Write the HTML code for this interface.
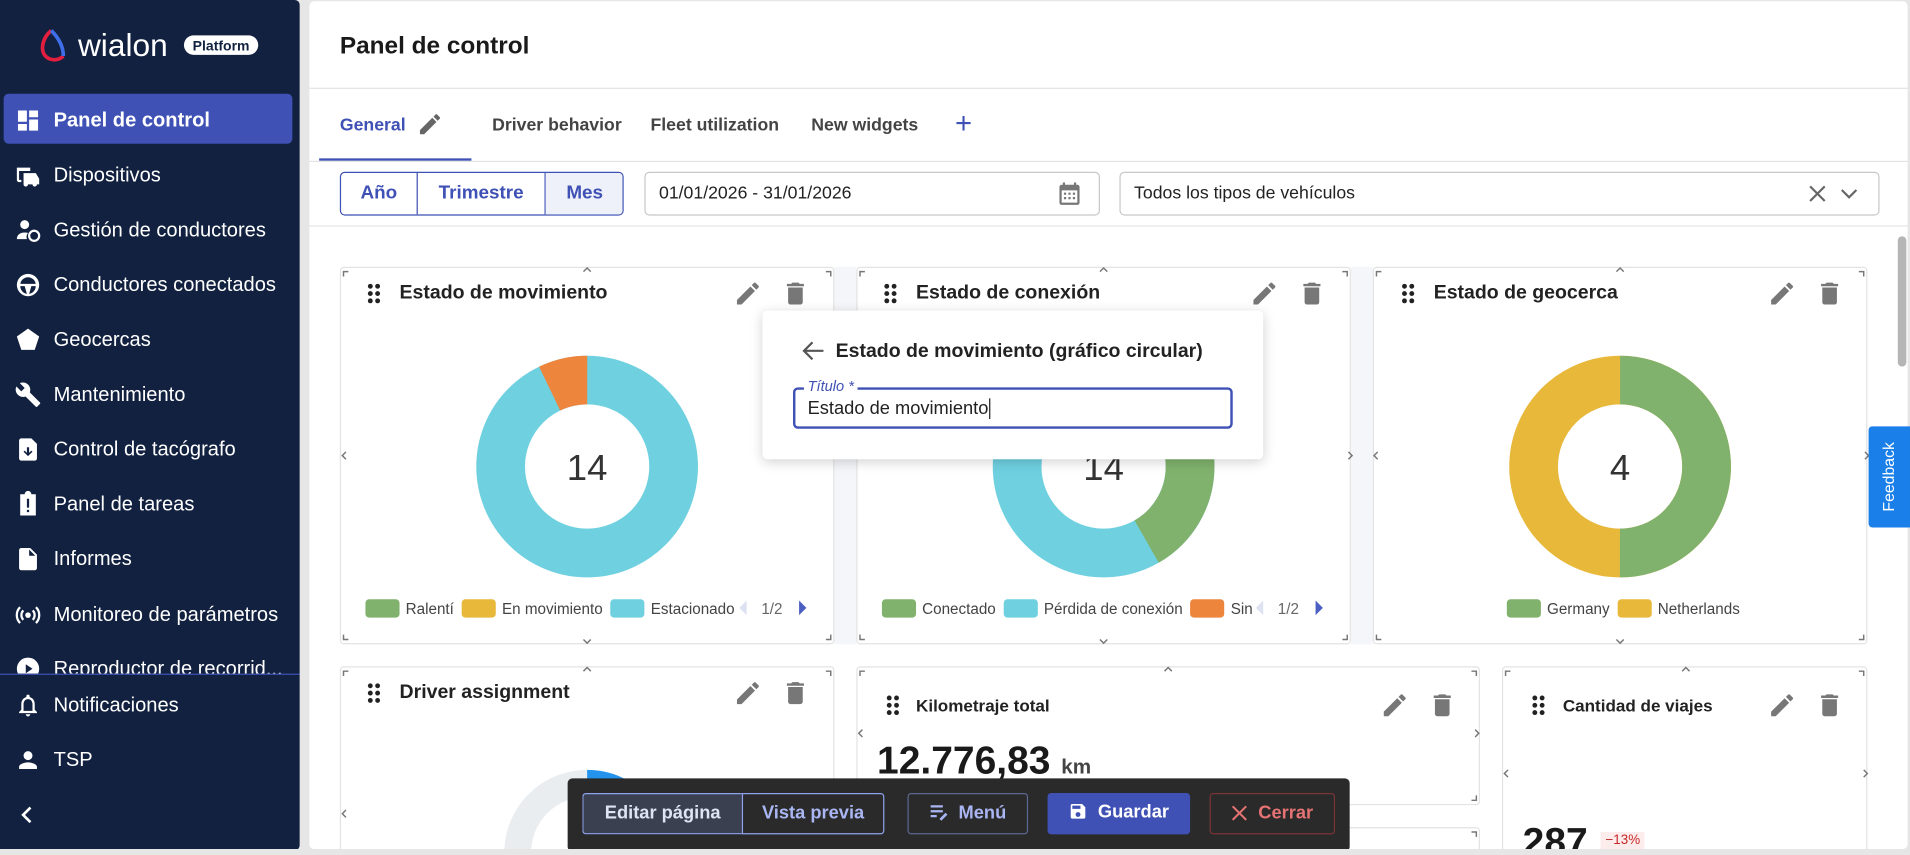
<!DOCTYPE html>
<html><head><meta charset="utf-8"><style>
*{box-sizing:border-box;margin:0;padding:0}
html,body{width:1910px;height:855px;overflow:hidden;background:#e6e6e6;font-family:"Liberation Sans",Arial,sans-serif}
#w{position:absolute;left:0;top:0;width:1568px;height:702px;transform:scale(1.21811);transform-origin:0 0;overflow:hidden}
#clip{position:absolute;left:0;top:0;width:1568px;height:697px;overflow:hidden}
.abs{position:absolute}
#side{left:0;top:0;width:246px;height:698px;background:#11213f;border-radius:0 4px 4px 0;overflow:hidden}
.mi{position:absolute;left:3px;width:237px;height:41px;color:#fff;font-size:16.5px;line-height:44px;padding-left:41px}
.mi svg{position:absolute;left:9px;top:11px;width:22px;height:22px;fill:#fff}
#main{left:254px;top:1px;width:1312px;height:696px;background:#fff;border-radius:4px;overflow:hidden}
.card{position:absolute;background:#fff;border:1px solid #e3e3e3;border-radius:3px}
.ttl{position:absolute;font-weight:bold;color:#222;font-size:16px}
.lg{position:absolute;font-size:12.5px;color:#444;white-space:nowrap}
.sw{display:inline-block;width:28px;height:15px;border-radius:3px;vertical-align:-3px;margin:0 5px 0 0}
.tb{position:absolute;top:12px;height:34px;line-height:32px;font-size:15px;font-weight:bold;text-align:center;border-radius:3px}
</style></head><body><div id="w"><div id="clip">

<div id="side" class="abs">
 <svg class="abs" style="left:30px;top:22px" width="190" height="30" viewBox="0 0 190 30">
  <path d="M12 3 C4 10 2 22 10 26 C14 28 19 27 22 24" stroke="#e41e3f" stroke-width="3" fill="none"/>
  <path d="M12 3 C18 9 22 16 22 24" stroke="#3f6ee8" stroke-width="3" fill="none"/>
  <text x="34" y="24" fill="#fff" font-size="26" font-family="Liberation Sans">wialon</text>
  <rect x="121" y="7" width="61" height="16" rx="8" fill="#fff"/>
  <text x="151.5" y="19.5" fill="#11213f" font-size="11.5" font-weight="bold" text-anchor="middle" font-family="Liberation Sans">Platform</text>
 </svg>
 <div class="mi" style="top:77px;background:#3f51b5;border-radius:4px;font-weight:bold"><svg viewBox="0 0 24 24"><path d="M3 13h8V3H3v10zm0 8h8v-6H3v6zm10 0h8V11h-8v10zm0-18v6h8V3h-8z"/></svg>Panel de control</div>
 <div class="mi" style="top:122px"><svg viewBox="0 0 24 24"><path d="M2 5h12v3H4v8h2v2H4a2 2 0 01-2-2zM8 10h11l3 5v5h-2a2 2 0 01-4 0h-4a2 2 0 01-4 0H8z"/></svg>Dispositivos</div>
 <div class="mi" style="top:167px"><svg viewBox="0 0 24 24"><circle cx="9" cy="7" r="4"/><path d="M2 20c0-4 3-6 7-6 1 0 2 .1 3 .4A6 6 0 0011 20z"/><circle cx="17.5" cy="17" r="4.5" fill="none" stroke="#fff" stroke-width="2"/></svg>Gestión de conductores</div>
 <div class="mi" style="top:212px"><svg viewBox="0 0 24 24"><path d="M12 2a10 10 0 100 20 10 10 0 000-20zm0 3a7 7 0 016.9 6H5.1A7 7 0 0112 5zM5.1 13H9l2 6.9A7 7 0 015.1 13zm7.9 6.9l2-6.9h3.9a7 7 0 01-5.9 6.9z"/></svg>Conductores conectados</div>
 <div class="mi" style="top:257px"><svg viewBox="0 0 24 24"><path d="M12 2l10 7-4 12H6L2 9z"/></svg>Geocercas</div>
 <div class="mi" style="top:302px"><svg viewBox="0 0 24 24"><path d="M22.7 19l-9.1-9.1c.9-2.3.4-5-1.5-6.9-2-2-5-2.4-7.4-1.3L9 6 6 9 1.6 4.7C.4 7.1.9 10.1 2.9 12.1c1.9 1.9 4.6 2.4 6.9 1.5l9.1 9.1c.4.4 1 .4 1.4 0l2.3-2.3c.5-.4.5-1.1.1-1.4z"/></svg>Mantenimiento</div>
 <div class="mi" style="top:347px"><svg viewBox="0 0 24 24"><path d="M6 2h9l5 5v13a2 2 0 01-2 2H6a2 2 0 01-2-2V4a2 2 0 012-2zm5 8v5l-2-2-1 1 4 4 4-4-1-1-2 2v-5z"/></svg>Control de tacógrafo</div>
 <div class="mi" style="top:392px"><svg viewBox="0 0 24 24"><path d="M5 3h4a3 3 0 016 0h4v19H5zm6 4v8h2V7zm0 10v2h2v-2z"/></svg>Panel de tareas</div>
 <div class="mi" style="top:437px"><svg viewBox="0 0 24 24"><path d="M6 2h8l6 6v12a2 2 0 01-2 2H6a2 2 0 01-2-2V4a2 2 0 012-2zm7 1.5V9h5.5z"/></svg>Informes</div>
 <div class="mi" style="top:483px"><svg viewBox="0 0 24 24"><circle cx="12" cy="12" r="2.5"/><path d="M7.8 7.8a6 6 0 000 8.4M16.2 7.8a6 6 0 010 8.4M4.9 4.9a10 10 0 000 14.2M19.1 4.9a10 10 0 010 14.2" stroke="#fff" stroke-width="2" fill="none"/></svg>Monitoreo de parámetros</div>
 <div class="mi" style="top:527px;height:26px;overflow:hidden"><svg viewBox="0 0 24 24"><circle cx="12" cy="12" r="10"/><path d="M10 8v8l6-4z" fill="#11213f"/></svg>Reproductor de recorrid...</div>
 <div class="abs" style="left:0;top:553px;width:246px;height:1px;background:#3f51b5"></div>
 <div class="mi" style="top:557px"><svg viewBox="0 0 24 24"><path d="M12 22a2 2 0 002-2h-4a2 2 0 002 2zm6-6V11c0-3-1.6-5.6-4.5-6.3V4a1.5 1.5 0 00-3 0v.7C7.6 5.4 6 8 6 11v5l-2 2v1h16v-1zm-2 1H8v-6c0-2.5 1.5-4.5 4-4.5s4 2 4 4.5z"/></svg>Notificaciones</div>
 <div class="mi" style="top:602px"><svg viewBox="0 0 24 24"><path d="M12 12a4 4 0 100-8 4 4 0 000 8zm0 2c-2.7 0-8 1.3-8 4v2h16v-2c0-2.7-5.3-4-8-4z"/></svg>TSP</div>
 <svg class="abs" style="left:15px;top:661px" width="16" height="16" viewBox="0 0 16 16"><path d="M10 2L4 8l6 6" stroke="#fff" stroke-width="2.2" fill="none"/></svg>
</div>

<div id="main" class="abs">
 <div class="abs" style="left:25px;top:26px;font-size:20px;font-weight:bold;color:#1a1a1a">Panel de control</div>
 <div class="abs" style="left:0;top:71px;width:1312px;height:1px;background:#e4e4e4"></div>
 <div class="abs" style="left:25px;top:94px;font-size:14.5px;color:#3f51b5;font-weight:bold">General</div>
 <svg class="abs" style="left:88px;top:90px" width="22" height="22" viewBox="0 0 24 24"><path fill="#666" d="M3 17.25V21h3.75L17.81 9.94l-3.75-3.75L3 17.25zM20.71 7.04a1 1 0 000-1.41l-2.34-2.34a1 1 0 00-1.41 0l-1.83 1.83 3.75 3.75 1.83-1.83z"/></svg>
 <div class="abs" style="left:150px;top:94px;font-size:14.5px;color:#444;font-weight:bold">Driver behavior</div>
 <div class="abs" style="left:280px;top:94px;font-size:14.5px;color:#444;font-weight:bold">Fleet utilization</div>
 <div class="abs" style="left:412px;top:94px;font-size:14.5px;color:#444;font-weight:bold">New widgets</div>
 <div class="abs" style="left:530px;top:87px;font-size:24px;color:#3f51b5">+</div>
 <div class="abs" style="left:8px;top:129px;width:125px;height:2px;background:#3f51b5"></div>
 <div class="abs" style="left:0;top:131px;width:1312px;height:1px;background:#e4e4e4"></div>

 <div class="abs" style="left:25px;top:140px;width:233px;height:36px;border:1px solid #3f51b5;border-radius:4px;overflow:hidden;font-size:15.5px;font-weight:bold;color:#3f51b5">
  <div class="abs" style="left:0;top:0;width:62px;height:34px;line-height:34px;text-align:center">Año</div>
  <div class="abs" style="left:62px;top:0;width:106px;height:34px;line-height:34px;text-align:center;border-left:1px solid #3f51b5;border-right:1px solid #3f51b5">Trimestre</div>
  <div class="abs" style="left:168px;top:0;width:64px;height:34px;line-height:34px;text-align:center;background:#eef0fa">Mes</div>
 </div>
 <div class="abs" style="left:275px;top:140px;width:374px;height:36px;border:1px solid #c8c8c8;border-radius:4px;font-size:14.5px;line-height:34px;padding-left:11px;color:#222">01/01/2026 - 31/01/2026
  <svg class="abs" style="left:337px;top:6px" width="22" height="22" viewBox="0 0 24 24"><path fill="#777" d="M19 4h-1V2h-2v2H8V2H6v2H5a2 2 0 00-2 2v14a2 2 0 002 2h14a2 2 0 002-2V6a2 2 0 00-2-2zm0 16H5V9h14zM7 11h2v2H7zm4 0h2v2h-2zm4 0h2v2h-2zm-8 4h2v2H7zm4 0h2v2h-2zm4 0h2v2h-2z"/></svg></div>
 <div class="abs" style="left:665px;top:140px;width:624px;height:36px;border:1px solid #c8c8c8;border-radius:4px;font-size:14.5px;line-height:34px;padding-left:11px;color:#222">Todos los tipos de vehículos
  <svg class="abs" style="left:565px;top:10px" width="14" height="14" viewBox="0 0 14 14"><path d="M1 1l12 12M13 1L1 13" stroke="#666" stroke-width="1.8"/></svg>
  <svg class="abs" style="left:591px;top:12px" width="14" height="10" viewBox="0 0 14 10"><path d="M1 2l6 6 6-6" stroke="#666" stroke-width="1.8" fill="none"/></svg></div>
 <div class="abs" style="left:0;top:184px;width:1312px;height:1px;background:#e4e4e4"></div>
 <div class="abs" style="left:431px;top:218px;width:18px;height:310px;background:#f5f6fa"></div>
 <div class="abs" style="left:855px;top:218px;width:18px;height:310px;background:#f5f6fa"></div>
 <div class="abs" style="left:1304px;top:193px;width:7px;height:107px;background:#b5b5b5;border-radius:4px"></div>
</div>

<div class="card" style="left:279px;top:219px;width:406px;height:310px"></div>
<div class="card" style="left:703px;top:219px;width:406px;height:310px"></div>
<div class="card" style="left:1127px;top:219px;width:406px;height:310px"></div>
<div class="card" style="left:279px;top:547px;width:406px;height:160px"></div>
<div class="card" style="left:703px;top:547px;width:512px;height:114px"></div>
<div class="card" style="left:703px;top:679px;width:512px;height:40px"></div>
<div class="card" style="left:1233px;top:547px;width:300px;height:160px"></div>

<svg class="abs" style="left:0;top:0" width="1568" height="697">
 <g fill="#222">
  <g id="d1"><circle cx="304" cy="235" r="2"/><circle cx="310" cy="235" r="2"/><circle cx="304" cy="241" r="2"/><circle cx="310" cy="241" r="2"/><circle cx="304" cy="247" r="2"/><circle cx="310" cy="247" r="2"/></g>
  <use href="#d1" x="424"/><use href="#d1" x="849"/><use href="#d1" y="328"/><use href="#d1" x="426" y="338"/><use href="#d1" x="956" y="338"/>
 </g>
 <g fill="#777">
  <g id="ed"><path transform="translate(602,229)" d="M3 17.25V21h3.75L17.81 9.94l-3.75-3.75L3 17.25zM20.71 7.04a1 1 0 000-1.41l-2.34-2.34a1 1 0 00-1.41 0l-1.83 1.83 3.75 3.75 1.83-1.83z"/>
  <path transform="translate(641,229)" d="M6 19c0 1.1.9 2 2 2h8c1.1 0 2-.9 2-2V7H6v12zM19 4h-3.5l-1-1h-5l-1 1H5v2h14V4z"/></g>
  <use href="#ed" x="424"/><use href="#ed" x="849"/><use href="#ed" y="328"/><use href="#ed" x="531" y="338"/><use href="#ed" x="849" y="338"/>
 </g>
 <g stroke="#777" stroke-width="1.2" fill="none">
  <path d="M282 227v-4h4M682 227v-4h-4M282 521v4h4M682 521v4h-4M706 227v-4h4M1106 227v-4h-4M706 521v4h4M1106 521v4h-4M1130 227v-4h4M1530 227v-4h-4M1130 521v4h4M1530 521v4h-4M282 555v-4h4M682 555v-4h-4M706 555v-4h4M1212 555v-4h-4M1212 653v4h-4M1236 555v-4h4M1530 555v-4h-4M1212 687v-4h-4"/>
  <path d="M479 223l3-3 3 3M903 223l3-3 3 3M1327 223l3-3 3 3M479 551l3-3 3 3M956 551l3-3 3 3M1381 551l3-3 3 3M479 525l3 3 3-3M903 525l3 3 3-3M1327 525l3 3 3-3"/>
  <path d="M284 371l-3 3 3 3M1107 371l3 3-3 3M1131 371l-3 3 3 3M1531 371l3 3-3 3M284 665l-3 3 3 3M708 599l-3 3 3 3M1211 599l3 3-3 3M1238 632l-3 3 3 3M1530 632l3 3-3 3"/>
 </g>
 <circle cx="482" cy="383" r="71" fill="none" stroke="#6fd0e0" stroke-width="40"/>
 <circle cx="482" cy="383" r="71" fill="none" stroke="#ee853c" stroke-width="40" stroke-dasharray="31.9 500" transform="rotate(-115.7 482 383)"/>
 <circle cx="906" cy="383" r="71" fill="none" stroke="#6fd0e0" stroke-width="40"/>
 <circle cx="906" cy="383" r="71" fill="none" stroke="#80b26d" stroke-width="40" stroke-dasharray="186 500" transform="rotate(-90 906 383)"/>
 <circle cx="1330" cy="383" r="71" fill="none" stroke="#e8b83a" stroke-width="40"/>
 <circle cx="1330" cy="383" r="71" fill="none" stroke="#80b26d" stroke-width="40" stroke-dasharray="223.1 500" transform="rotate(-90 1330 383)"/>
 <circle cx="482" cy="700" r="57" fill="none" stroke="#e9edf0" stroke-width="22"/>
 <circle cx="482" cy="700" r="57" fill="none" stroke="#2393ee" stroke-width="22" stroke-dasharray="72 500" transform="rotate(-90 482 700)"/>
 <g font-size="30" fill="#333" text-anchor="middle" font-family="Liberation Sans"><text x="482" y="394">14</text><text x="906" y="394">14</text><text x="1330" y="394">4</text></g>
 <path d="M613 493l-6 6 6 6z" fill="#dde2f2"/><path d="M656 493l6 6-6 6z" fill="#4a5fc1"/>
 <path d="M1037 493l-6 6 6 6z" fill="#dde2f2"/><path d="M1080 493l6 6-6 6z" fill="#4a5fc1"/>
</svg>

<div class="ttl" style="left:328px;top:232px">Estado de movimiento</div>
<div class="ttl" style="left:752px;top:232px">Estado de conexión</div>
<div class="ttl" style="left:1177px;top:232px">Estado de geocerca</div>
<div class="ttl" style="left:328px;top:560px">Driver assignment</div>
<div class="ttl" style="left:752px;top:571px;font-size:14px">Kilometraje total</div>
<div class="ttl" style="left:1283px;top:571px;font-size:14px">Cantidad de viajes</div>

<div class="lg" style="left:300px;top:492px"><span class="sw" style="background:#80b26d"></span>Ralentí <span class="sw" style="background:#e8b83a;margin-left:3px"></span>En movimiento <span class="sw" style="background:#6fd0e0;margin-left:3px"></span>Estacionado</div>
<div class="lg" style="left:625px;top:493px;color:#666">1/2</div>
<div class="lg" style="left:724px;top:492px"><span class="sw" style="background:#80b26d"></span>Conectado <span class="sw" style="background:#6fd0e0;margin-left:3px"></span>Pérdida de conexión <span class="sw" style="background:#ee853c;margin-left:3px"></span>Sin</div>
<div class="lg" style="left:1049px;top:493px;color:#666">1/2</div>
<div class="lg" style="left:1237px;top:492px"><span class="sw" style="background:#80b26d"></span>Germany <span class="sw" style="background:#e8b83a;margin-left:3px"></span>Netherlands</div>

<div class="abs" style="left:720px;top:606px;font-size:32px;font-weight:bold;color:#1a1a1a">12.776,83 <span style="font-size:17px;color:#444">km</span></div>
<div class="abs" style="left:1250px;top:673px;font-size:32px;font-weight:bold;color:#1a1a1a">287</div>
<div class="abs" style="left:1314px;top:683px;font-size:11px;color:#c62828;background:#fdecec;padding:1px 4px">−13%</div>

<div class="abs" style="left:626px;top:255px;width:411px;height:122px;background:#fff;border-radius:4px;box-shadow:0 2px 10px rgba(0,0,0,.18)">
 <svg class="abs" style="left:32px;top:24px" width="20" height="18" viewBox="0 0 20 18"><path d="M18 9H3M9 2L2 9l7 7" stroke="#555" stroke-width="1.8" fill="none"/></svg>
 <div class="abs" style="left:60px;top:25px;font-size:16px;font-weight:bold;color:#222">Estado de movimiento (gráfico circular)</div>
 <div class="abs" style="left:25px;top:63px;width:361px;height:34px;border:2px solid #3f51b5;border-radius:4px;font-size:15px;line-height:32px;padding-left:10px;color:#222">Estado de movimiento<span style="border-left:1px solid #222;margin-left:1px"></span></div>
 <div class="abs" style="left:34px;top:55px;background:#fff;padding:0 3px;font-size:12px;color:#3f51b5;font-style:italic">Título *</div>
</div>

<div class="abs" style="left:1534px;top:350px;width:34px;height:83px;background:#1a7fe8;border-radius:3px 0 0 3px"></div>
<div class="abs" style="left:1534px;top:350px;width:34px;height:83px;color:#fff;font-size:13px;writing-mode:vertical-rl;transform:rotate(180deg);text-align:center;line-height:34px">Feedback</div>

<div class="abs" style="left:466px;top:639px;width:642px;height:60px;background:#2a2a2a;border-radius:4px">
 <div class="tb" style="left:12px;width:131px;background:#3b4050;border:1px solid #8ea2ee;border-right:none;border-radius:3px 0 0 3px;color:#dfe3f3">Editar página</div>
 <div class="tb" style="left:143px;width:117px;border:1px solid #8ea2ee;border-radius:0 3px 3px 0;color:#a9b6f3">Vista previa</div>
 <div class="tb" style="left:279px;width:99px;border:1px solid #5b6893;color:#a9b6f3"><svg style="vertical-align:-3px;margin-right:8px" width="16" height="16" viewBox="0 0 16 16"><path d="M1 3h10M1 7h10M1 11h5" stroke="#a9b6f3" stroke-width="1.8"/><path d="M9 14l5-5" stroke="#a9b6f3" stroke-width="2.2"/></svg>Menú</div>
 <div class="tb" style="left:394px;width:117px;background:#3f51b5;color:#fff"><svg style="vertical-align:-3px;margin-right:8px" width="16" height="16" viewBox="0 0 24 24"><path fill="#fff" d="M17 3H5a2 2 0 00-2 2v14a2 2 0 002 2h14a2 2 0 002-2V7zm-5 16a3 3 0 110-6 3 3 0 010 6zm3-10H5V5h10z"/></svg>Guardar</div>
 <div class="tb" style="left:527px;width:103px;border:1px solid #7a3434;color:#e57373"><svg style="vertical-align:-2px;margin-right:9px" width="13" height="13" viewBox="0 0 14 14"><path d="M1 1l12 12M13 1L1 13" stroke="#e57373" stroke-width="1.8"/></svg>Cerrar</div>
</div>
</div></div></body></html>
